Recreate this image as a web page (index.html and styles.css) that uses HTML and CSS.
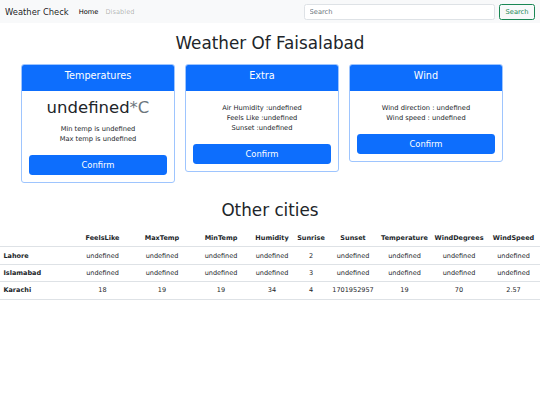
FILE: index.html
```html
<!DOCTYPE html>
<html lang="en">
<head>
<meta charset="utf-8">
<title>Weather Check</title>
<link rel="stylesheet" href="styles.css">
</head>
<body>
<nav class="navbar">
  <div class="nav-left">
    <a class="brand">Weather Check</a>
    <a class="nav-link active">Home</a>
    <a class="nav-link disabled">Disabled</a>
  </div>
  <form class="search">
    <input class="search-input" type="search" placeholder="Search">
    <button class="search-btn" type="button">Search</button>
  </form>
</nav>

<h1 class="title">Weather Of Faisalabad</h1>

<div class="cards">
  <div class="card">
    <div class="card-header">Temperatures</div>
    <div class="card-body body-temp">
      <div class="big">undefined<span class="unit">*C</span></div>
      <p class="info">Min temp is undefined<br>Max temp is undefined</p>
      <button class="btn" type="button">Confirm</button>
    </div>
  </div>
  <div class="card">
    <div class="card-header">Extra</div>
    <div class="card-body body-list">
      <p class="info">Air Humidity :undefined<br>Feels Like :undefined<br>Sunset :undefined</p>
      <button class="btn" type="button">Confirm</button>
    </div>
  </div>
  <div class="card">
    <div class="card-header">Wind</div>
    <div class="card-body body-list">
      <p class="info">Wind direction : undefined<br>Wind speed : undefined</p>
      <button class="btn" type="button">Confirm</button>
    </div>
  </div>
</div>

<h1 class="title title-cities">Other cities</h1>

<table class="cities">
  <thead>
    <tr>
      <th class="c0"></th>
      <th class="c1">FeelsLike</th>
      <th class="c2">MaxTemp</th>
      <th class="c3">MinTemp</th>
      <th class="c4">Humidity</th>
      <th class="c5">Sunrise</th>
      <th class="c6">Sunset</th>
      <th class="c7">Temperature</th>
      <th class="c8">WindDegrees</th>
      <th class="c9">WindSpeed</th>
    </tr>
  </thead>
  <tbody>
    <tr>
      <th class="city">Lahore</th>
      <td>undefined</td><td>undefined</td><td>undefined</td><td>undefined</td>
      <td>2</td><td>undefined</td><td>undefined</td><td>undefined</td><td>undefined</td>
    </tr>
    <tr>
      <th class="city">Islamabad</th>
      <td>undefined</td><td>undefined</td><td>undefined</td><td>undefined</td>
      <td>3</td><td>undefined</td><td>undefined</td><td>undefined</td><td>undefined</td>
    </tr>
    <tr>
      <th class="city">Karachi</th>
      <td>18</td><td>19</td><td>19</td><td>34</td>
      <td>4</td><td>1701952957</td><td>19</td><td>70</td><td>2.57</td>
    </tr>
  </tbody>
</table>
</body>
</html>
```

FILE: styles.css
```css
* {
  box-sizing: border-box;
}

body {
  margin: 0;
  font-family: "DejaVu Sans", sans-serif;
  font-size: 6.7px;
  line-height: 10px;
  color: #212529;
  background: #fff;
}

.navbar {
  height: 23px;
  background: #f8f9fa;
  display: flex;
  align-items: center;
  justify-content: space-between;
  padding: 0 5px;
}

.nav-left {
  display: flex;
  align-items: center;
}

.brand {
  font-size: 8.4px;
  color: rgba(0, 0, 0, 0.9);
  margin-right: 10px;
}

.nav-link {
  font-size: 6.7px;
}

.nav-link.active {
  color: #000;
  margin-right: 7px;
}

.nav-link.disabled {
  color: rgba(0, 0, 0, 0.3);
}

.search {
  display: flex;
  align-items: center;
  gap: 4px;
  margin: 0;
}

.search-input {
  width: 191px;
  height: 16px;
  padding: 0 4.5px;
  border: 1px solid #dee2e6;
  border-radius: 2.5px;
  background: #fff;
  font-family: "DejaVu Sans", sans-serif;
  font-size: 6.7px;
  color: #212529;
  outline: none;
}

.search-input::placeholder {
  color: #6c757d;
}

.search-btn {
  height: 16px;
  padding: 0 5.5px;
  border: 1px solid #198754;
  border-radius: 2.5px;
  background: transparent;
  color: #198754;
  font-family: "DejaVu Sans", sans-serif;
  font-size: 6.7px;
}

.title {
  margin: 10px 0 0;
  font-size: 16.8px;
  line-height: 20px;
  font-weight: 400;
  text-align: center;
}

.cards {
  display: flex;
  align-items: flex-start;
  gap: 10px;
  padding-left: 21px;
  margin-top: 11px;
}

.card {
  width: 154px;
  border: 1px solid #9ec5fe;
  border-radius: 3px;
  overflow: hidden;
  text-align: center;
  background: #fff;
}

.card-header {
  background: #0d6efd;
  color: #fff;
  font-size: 9.7px;
  line-height: 12px;
  padding: 5px 0 9px;
}

.card-body {
  padding: 7px 7px 7px;
}

.body-list {
  padding-top: 12px;
}

.big {
  font-size: 16.5px;
  line-height: 20px;
  margin-bottom: 6px;
}

.unit {
  color: #6c757d;
}

.info {
  margin: 0 0 11px;
  line-height: 10px;
}

.btn {
  display: block;
  width: 100%;
  height: 20px;
  border: none;
  border-radius: 3.4px;
  background: #0d6efd;
  color: #fff;
  font-family: "DejaVu Sans", sans-serif;
  font-size: 8.4px;
}

.title-cities {
  margin-top: 17px;
}

.cities {
  width: 100%;
  table-layout: fixed;
  border-collapse: collapse;
  margin-top: 10px;
  font-size: 6.5px;
  line-height: 10px;
}

.cities th,
.cities td {
  padding: 3.2px 2.5px;
  border-bottom: 1px solid #dee2e6;
  text-align: center;
  white-space: nowrap;
}

.cities th {
  font-weight: bold;
}

.cities th.city {
  text-align: left;
  padding-left: 3.4px;
}

.c0 { width: 73px; }
.c1 { width: 59px; }
.c2 { width: 60px; }
.c3 { width: 58px; }
.c4 { width: 44px; }
.c5 { width: 34px; }
.c6 { width: 50px; }
.c7 { width: 53px; }
.c8 { width: 56px; }
.c9 { width: 53px; }
```
